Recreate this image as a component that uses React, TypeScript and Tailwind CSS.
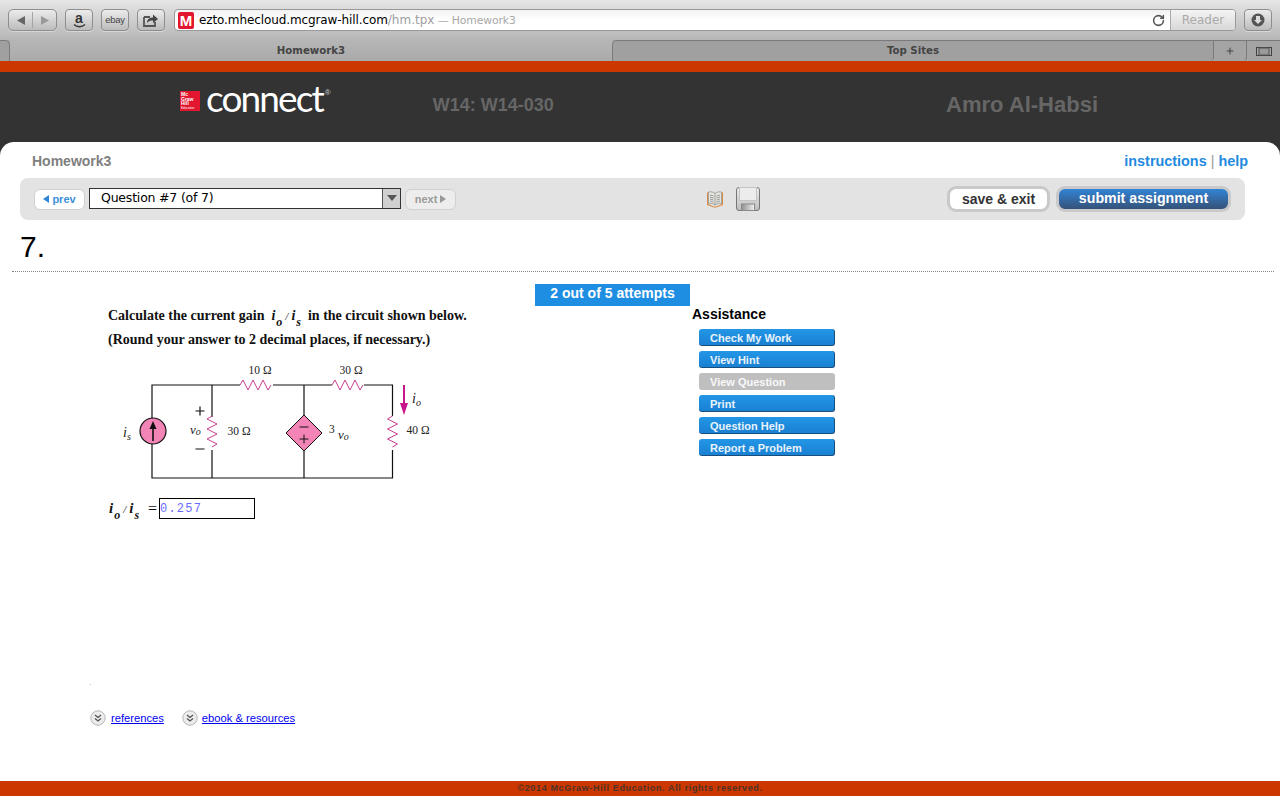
import { RotateCw, Plus } from 'lucide-react';

const sans = 'font-["Liberation_Sans",Arial,sans-serif]';

function ToolbarButton({ className, children }: { className: string; children: React.ReactNode }) {
  return (
    <div className={`h-[22px] rounded-[4px] border border-[#8e8e8e] bg-gradient-to-b from-[#ececec] to-[#bcbcbc] flex items-center justify-center shadow-[0_1px_0_#d8d8d8] ${className}`}>
      {children}
    </div>
  );
}

function AssistButton({ label, disabled }: { label: string; disabled?: boolean }) {
  return (
    <div
      className={`w-[136px] h-[17px] rounded-[3px] pl-[11px] text-[11px] leading-[18px] font-bold text-white/90 ${
        disabled
          ? 'bg-[#bfbfbf]'
          : 'bg-gradient-to-b from-[#2396e6] to-[#1a80d2] border-b border-r border-[#17507f]'
      }`}
    >
      {label}
    </div>
  );
}

function Ratio({ gap }: { gap: string }) {
  return (
    <span className="italic">
      i<sub className="text-[12px] align-[-3px] leading-none ml-[1px]">o</sub>
      <span className={`font-normal text-[11px] ${gap}`}>/</span>
      i<sub className="text-[12px] align-[-3px] leading-none ml-[1px]">s</sub>
    </span>
  );
}

function Circuit() {
  const pink = '#c6408f';
  const horiz = (x: number, y: number) =>
    `M${x} ${y} l3 -5 l5 10 l5 -10 l5 10 l5 -10 l5 10 l3 -5`;
  const vert = (x: number, y: number) =>
    `M${x} ${y} l-5 3 l10 5 l-10 5 l10 5 l-10 5 l10 5 l-5 3`;
  return (
    <svg width="340" height="130" viewBox="100 360 340 130" className="block">
      <g fill="none" stroke="#111" strokeWidth="1.2">
        <path d="M240 385H152V478H392.5V450M212 385V417M212 450V478M273 385H332M304 385V415M304 451V478M364 385H392.5V416" />
      </g>
      <g fill="none" stroke={pink} strokeWidth="1">
        <path d={horiz(240, 385)} />
        <path d={horiz(332, 385)} />
        <path d={vert(212, 416)} />
        <path d={vert(392.5, 416)} />
      </g>
      <circle cx="153" cy="431" r="13" fill="#f285b5" stroke="#111" strokeWidth="1.2" />
      <path d="M153 441V427" stroke="#111" strokeWidth="1.6" />
      <path d="M153 421l-3.5 8h7z" fill="#111" />
      <path d="M304 415l18 18 -18 18 -18 -18z" fill="#f285b5" stroke="#111" strokeWidth="1" />
      <path d="M299.500 427h9M299.500 439h9M304 434.500v9" stroke="#111" strokeWidth="1" />
      <path d="M404 385V404" stroke="#c8178a" strokeWidth="2" />
      <path d="M400 403h8l-4 12z" fill="#c8178a" />
      <path d="M195.500 411h9M200 406.500v9M195.500 449h9" stroke="#111" strokeWidth="1.2" />
      <g fontFamily="'Liberation Serif', serif" fontSize="11.500" fontWeight="400" fill="#222">
        <text x="260" y="374" textAnchor="middle">10 Ω</text>
        <text x="351" y="374" textAnchor="middle">30 Ω</text>
        <text x="239" y="435" textAnchor="middle">30 Ω</text>
        <text x="418" y="434" textAnchor="middle">40 Ω</text>
        <text x="329" y="433">3</text>
        <text x="338" y="439" fontStyle="italic" fontSize="13">v<tspan fontSize="10" dy="1">o</tspan></text>
        <text x="190" y="434" fontStyle="italic" fontSize="13">v<tspan fontSize="10" dy="1">o</tspan></text>
        <text x="123" y="437" fontStyle="italic" fontSize="14">i<tspan fontSize="10" dy="3">s</tspan></text>
        <text x="412" y="403" fontStyle="italic" fontSize="14">i<tspan fontSize="10" dy="3">o</tspan></text>
      </g>
    </svg>
  );
}

function ChevronCircle() {
  return (
    <svg width="16" height="16" viewBox="0 0 16 16" className="shrink-0">
      <circle cx="8" cy="8" r="7.2" fill="#ececec" stroke="#b5b5b5" />
      <path d="M5 5l3 2.500 3 -2.500M5 8.500l3 2.500 3 -2.500" fill="none" stroke="#555" strokeWidth="1.300" />
    </svg>
  );
}

export default function App() {
  return (
    <div className={`w-[1280px] h-[800px] overflow-hidden flex flex-col bg-white ${sans}`}>
      {/* browser toolbar */}
      <div className="h-[40px] shrink-0 bg-gradient-to-b from-[#e6e6e6] to-[#b6b6b6] flex items-start pt-[9px] pl-[8px] pr-[8px]">
        <ToolbarButton className="w-[49px] rounded-[5px] gap-0">
          <span className="flex-1 flex justify-center">
            <svg width="8" height="9" viewBox="0 0 8 9"><path d="M0 4.500L8 0v9z" fill="#666" /></svg>
          </span>
          <span className="w-px h-[16px] bg-[#a5a5a5]" />
          <span className="flex-1 flex justify-center">
            <svg width="8" height="9" viewBox="0 0 8 9"><path d="M8 4.500L0 0v9z" fill="#999" /></svg>
          </span>
        </ToolbarButton>
        <ToolbarButton className="w-[28px] ml-[8px] flex-col">
          <span className="text-[14px] leading-[12px] font-bold text-[#333]">a</span>
          <svg width="13" height="4" viewBox="0 0 13 4" className="block">
            <path d="M1 .5c3 3 8 3 11 0" fill="none" stroke="#333" strokeWidth="1.300" />
          </svg>
        </ToolbarButton>
        <ToolbarButton className="w-[28px] ml-[8px]">
          <span className="text-[9.500px] text-[#444] tracking-tight">ebay</span>
        </ToolbarButton>
        <ToolbarButton className="w-[28px] ml-[8px]">
          <svg width="16" height="14" viewBox="0 0 16 14">
            <path d="M1 4h6M1 4v9h11V9" fill="none" stroke="#555" strokeWidth="1.800" />
            <path d="M4 10c0-4 3-5.500 6-5.500V1.500l5 4.500-5 4V7.500C7.500 7.500 5.500 8 4 10z" fill="#444" />
          </svg>
        </ToolbarButton>
        <div className="ml-[9px] w-[1062px] h-[22px] rounded-[4px] border border-[#999] bg-gradient-to-b from-[#f2f2f2] via-white to-white flex items-center overflow-hidden">
          <div className="ml-[3px] w-[16px] h-[17px] rounded-[2px] bg-[#e2162e] text-white text-[15px] leading-[17px] font-bold text-center">M</div>
          <div className='ml-[5px] text-[12px] font-["DejaVu_Sans",sans-serif] text-black whitespace-nowrap tracking-[-0.1px]'>
            ezto.mhecloud.mcgraw-hill.com<span className="text-[#a0a0a0] tracking-[0px]">/hm.tpx</span>
            <span className="text-[#a8a8a8] text-[10.800px]"> — Homework3</span>
          </div>
          <div className="ml-auto flex items-center h-full">
            <RotateCw size={13} strokeWidth={2.800} className="text-[#555] mr-[5px]" />
            <div className='w-[65px] h-full border-l border-[#aaa] bg-gradient-to-b from-[#f4f4f4] to-[#d8d8d8] text-[#aaa] text-[12px] leading-[20px] text-center font-["DejaVu_Sans",sans-serif]'>
              Reader
            </div>
          </div>
        </div>
        <ToolbarButton className="w-[28px] ml-[8px]">
          <svg width="14" height="14" viewBox="0 0 14 14">
            <circle cx="7" cy="7" r="6.500" fill="#555" />
            <path d="M5 3h4v4h2l-4 4-4-4h2z" fill="#ddd" />
          </svg>
        </ToolbarButton>
      </div>

      {/* tabs */}
      <div className='h-[21px] shrink-0 flex bg-[#a9a9a9] text-[10.200px] font-bold text-[#444] font-["DejaVu_Sans",sans-serif]'>
        <div className="w-[10px] bg-[#a0a0a0] border-t border-r border-[#7a7a7a] rounded-tr-[5px]" />
        <div className="w-[602px] bg-gradient-to-b from-[#b6b6b6] to-[#aaaaaa] flex items-center justify-center">Homework3</div>
        <div className="w-[602px] bg-[#a0a0a0] border-t border-l border-r border-[#7a7a7a] rounded-tl-[5px] rounded-br-[4px] flex items-center justify-center">Top Sites</div>
        <div className="w-[33px] bg-[#a4a4a4] border-t border-r border-[#7a7a7a] rounded-br-[4px] flex items-center justify-center">
          <Plus size={10} strokeWidth={2.500} className="text-[#444]" />
        </div>
        <div className="flex-1 bg-[#a4a4a4] border-t border-[#7a7a7a] flex items-center justify-center">
          <svg width="16" height="9" viewBox="0 0 16 9">
            <path d="M0 .5h16M0 8.500h16M.5 0v9M15.500 0v9" stroke="#444" />
            <path d="M3 1h10v7H3z" fill="#999" stroke="#555" />
          </svg>
        </div>
      </div>

      <div className="h-[11px] shrink-0 bg-[#cc3700]" />

      {/* site header */}
      <div className="h-[70px] shrink-0 bg-[#333333] flex items-start">
        <div className="ml-[180px] mt-[19px] w-[20px] h-[20px] bg-[#e2162e] text-white text-[5px] leading-[4.500px] font-bold pl-[1px] pt-[1px]">
          Mc<br />Graw<br />Hill
          <div className="text-[3px] leading-[4px] font-normal whitespace-nowrap">Education</div>
        </div>
        <div className='ml-[6px] mt-[3px] text-[37px] leading-[46px] text-white font-["Lato",sans-serif] font-normal tracking-[-1.900px]'>
          connect
        </div>
        <span className="text-[#cccccc] text-[8px] leading-[10px] mt-[16px] ml-[2px]">®</span>
        <div className="ml-[102px] mt-[22px] text-[18px] leading-[22px] font-bold text-[#666]">W14: W14-030</div>
        <div className="ml-auto mr-[182px] mt-[20px] text-[22px] leading-[26px] font-bold text-[#666]">Amro Al-Habsi</div>
      </div>

      {/* main panel */}
      <div className="flex-1 min-h-0 bg-[#333333]">
        <div className="h-full bg-white rounded-t-[14px] flex flex-col">
          <div className="h-[36px] shrink-0 pl-[32px] pr-[32px] pt-[10px] flex justify-between items-start text-[14px] leading-[18px] font-bold">
            <span className="text-[#808080]">Homework3</span>
            <span className="text-[#1f8ae0] text-[14.400px]">
              instructions <span className="font-normal text-[#999]">|</span> help
            </span>
          </div>

          <div className="mx-[20px] w-[1225px] h-[42px] shrink-0 bg-[#e3e3e3] rounded-[8px] flex items-center pl-[14px]">
            <div className="w-[51px] h-[21px] rounded-[6px] border border-[#d0d0d0] bg-white flex items-center justify-center gap-[3px] text-[11px] font-bold text-[#3d8fd8]">
              <svg width="6" height="8" viewBox="0 0 6 8"><path d="M0 4l6-4v8z" fill="#2f86d6" /></svg>
              prev
            </div>
            <div className="ml-[4px] mb-[2px] w-[312px] h-[21px] border border-[#333] bg-white flex items-center">
              <span className='pl-[11px] flex-1 text-[12.500px] font-["DejaVu_Sans",sans-serif] tracking-[-0.2px] text-black'>Question #7 (of 7)</span>
              <div className="w-[18px] h-full bg-[#d0d0d0] border-l border-[#555] flex items-center justify-center">
                <svg width="10" height="6" viewBox="0 0 10 6"><path d="M0 0h10L5 6z" fill="#555" /></svg>
              </div>
            </div>
            <div className="ml-[4px] w-[51px] h-[21px] rounded-[6px] border border-[#d0d0d0] bg-[#ededed] flex items-center justify-center gap-[3px] text-[11px] font-bold text-[#9a9a9a]">
              next
              <svg width="6" height="8" viewBox="0 0 6 8"><path d="M6 4L0 0v8z" fill="#999" /></svg>
            </div>

            <svg width="18" height="18" viewBox="0 0 18 18" className="ml-[250px]">
              <path d="M1 3l1-1v12l6 2.500h2l6-2.500V2l1 1v12l-7 2.500H8L1 15z" fill="#d98a45" />
              <path d="M2.500 2c2.500-.5 5 0 6.500 1.500C10.500 2 13 1.500 15.500 2v11.500c-2.500-.5-5 0-6.500 1.500-1.500-1.500-4-2-6.500-1.500z" fill="#e6e6e0" stroke="#8a8a80" strokeWidth=".7" />
              <path d="M9 3.500V15M4 5l3.500 1M4 7l3.500 1M4 9l3.500 1M4 11l3.500 1M14 5l-3.500 1M14 7l-3.500 1M14 9l-3.500 1M14 11l-3.500 1" stroke="#888" strokeWidth=".8" />
            </svg>
            <svg width="24" height="24" viewBox="0 0 24 24" className="ml-[12px]">
              <defs>
                <linearGradient id="floppy" x1="0" y1="0" x2="0" y2="1">
                  <stop offset="0" stopColor="#ececec" />
                  <stop offset="1" stopColor="#bdbdbd" />
                </linearGradient>
                <linearGradient id="shutter" x1="0" y1="0" x2="1" y2="0">
                  <stop offset="0" stopColor="#8f8f8f" />
                  <stop offset="1" stopColor="#f2f2f2" />
                </linearGradient>
              </defs>
              <rect x="0.500" y="0.500" width="23" height="23" rx="2.500" fill="url(#floppy)" stroke="#777" />
              <rect x="3.500" y="0.500" width="17" height="13" fill="#ececec" stroke="#c4c4c4" />
              <rect x="5.500" y="17" width="13" height="6.500" fill="url(#shutter)" stroke="#8a8a8a" />
            </svg>

            <div className="ml-[187px] w-[103px] h-[26px] rounded-[9px] border-[3px] border-[#c9c9c9] bg-white flex items-center justify-center text-[14px] font-bold text-[#333]">
              save &amp; exit
            </div>
            <div className="ml-[6px] w-[175px] h-[26px] rounded-[9px] border-[3px] border-[#c9c9c9] bg-gradient-to-b from-[#2f84d6] to-[#345278] flex items-center justify-center text-[14.200px] leading-[16px] pb-[2px] font-bold text-white">
              submit assignment
            </div>
          </div>

          <div className="h-[52px] shrink-0 mx-[12px] w-[1262px] border-b border-dotted border-[#888] pl-[8px] pt-[9px] text-[30px] leading-[36px] text-black">
            7.
          </div>

          <div className="flex-1 flex min-h-0">
            <div className='ml-[100px] w-[435px] font-["Liberation_Serif",serif] text-[14px] font-bold text-[#111]'>
              <div className="pl-[8px] pt-[32px] leading-[24px] whitespace-nowrap">
                Calculate the current gain&nbsp; <Ratio gap="mx-[3px]" />&nbsp; in the circuit shown below.
                <br />
                (Round your answer to 2 decimal places, if necessary.)
              </div>
              <div className="mt-[8px]">
                <Circuit />
              </div>
              <div className="pl-[9px] mt-[8px] flex items-center h-[21px]">
                <span className="text-[15px] w-[39px] whitespace-nowrap"><Ratio gap="mx-[3px]" /></span>
                <span className="font-normal text-[16px]">=</span>
                <div className='ml-[2px] w-[96px] h-[21px] border border-black pl-0 text-[12px] leading-[20px] tracking-[1.200px] font-normal text-[#6a6aff] font-["Liberation_Mono",monospace]'>
                  0.257
                </div>
              </div>
            </div>
            <div className="w-[155px] shrink-0 mt-[12px] h-[22px] bg-[#1e8ee3] text-white text-[14px] leading-[18px] font-bold text-center">
              2 out of 5 attempts
            </div>
            <div className="ml-[2px] mt-[33px]">
              <div className="text-[14px] leading-[18px] font-bold text-black">Assistance</div>
              <div className="ml-[7px] mt-[6px] flex flex-col gap-[5px]">
                <AssistButton label="Check My Work" />
                <AssistButton label="View Hint" />
                <AssistButton label="View Question" disabled />
                <AssistButton label="Print" />
                <AssistButton label="Question Help" />
                <AssistButton label="Report a Problem" />
              </div>
            </div>
          </div>

          <div className="h-[97px] shrink-0 pl-[90px]">
            <div className="w-px h-px bg-[#bbb]" />
            <div className="mt-[25px] flex items-start gap-[3px] text-[11.200px] leading-[16px] text-[#0000ee]">
              <ChevronCircle />
              <a className="underline ml-[2px]">references</a>
              <span className="ml-[15px]"><ChevronCircle /></span>
              <a className="underline ml-[1px]">ebook &amp; resources</a>
            </div>
          </div>
        </div>
      </div>

      <div className="h-[15px] shrink-0 bg-[#cc3700] text-center text-[9px] leading-[14px] font-bold tracking-[0.650px] text-[#4d3327]">
        ©2014 McGraw-Hill Education. All rights reserved.
      </div>
      <div className="h-[4px] shrink-0 bg-white" />
    </div>
  );
}
